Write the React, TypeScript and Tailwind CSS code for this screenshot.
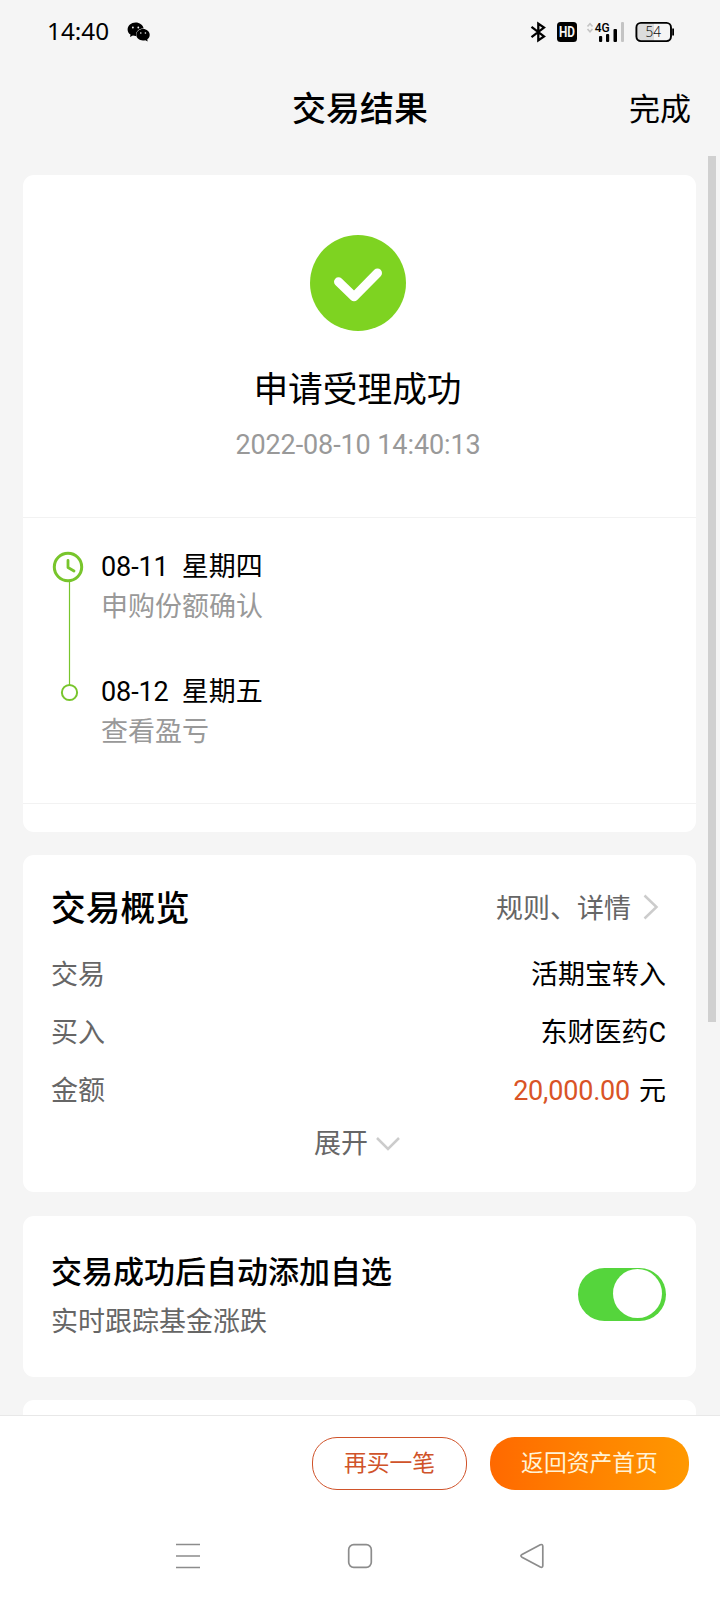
import type { ReactNode } from "react";

function WeChatIcon() {
  return (
    <svg width="24" height="20" viewBox="0 0 24 20" className="block">
      <path
        fill="#000"
        d="M8.6 0.6C4.2 0.6 0.6 3.6 0.6 7.4c0 2.1 1.1 4 2.9 5.2L3 15l2.9-1.5c.9.2 1.8.4 2.7.4h.5c0-.3-.1-.7-.1-1.1 0-3.600 3.300-6.300 7.300-6.300h.4C15.900 3.200 12.700.6 8.600.6Z"
      />
      <path
        fill="#000"
        d="M16 7.100c-3.700 0-6.700 2.500-6.700 5.700s3 5.700 6.700 5.700c.9 0 1.600-.1 2.300-.3l2.400 1.300-.5-2c1.600-1.100 2.500-2.800 2.500-4.700 0-3.200-3-5.700-6.700-5.700Z"
      />
      <g fill="#f4f4f4">
        <circle cx="5.900" cy="5.500" r="0.900" />
        <circle cx="11.300" cy="5.500" r="0.900" />
        <circle cx="13.800" cy="11" r="0.800" />
        <circle cx="18.400" cy="11" r="0.800" />
      </g>
    </svg>
  );
}

function StatusIcons() {
  return (
    <svg width="146" height="24" viewBox="0 0 146 24" className="block">
      <path
        d="M1.500 6.800 14 16.400 8.300 20.400V3.600L14 7.600 1.500 17.200"
        fill="none"
        stroke="#000"
        strokeWidth="2.300"
      />
      <rect x="27" y="2" width="20" height="20" rx="3.500" fill="#000" />
      <text x="29" y="17" fill="#f4f4f4" fontSize="14" fontWeight="700" fontFamily="Roboto, sans-serif" textLength="16" lengthAdjust="spacingAndGlyphs">
        HD
      </text>
      <path d="M57.500 6.500 60 3.700l2.500 2.800M57.500 9 60 11.800 62.500 9" fill="none" stroke="#c4c4c4" strokeWidth="1.600" />
      <text x="64.800" y="12" fill="#000" fontSize="13.500" fontWeight="500" fontFamily="Roboto, sans-serif" textLength="15" lengthAdjust="spacingAndGlyphs">
        4G
      </text>
      <rect x="69" y="16" width="3.200" height="6" rx="1" fill="#000" />
      <rect x="76" y="14" width="3.200" height="8" rx="1" fill="#000" />
      <rect x="83.500" y="9" width="3.500" height="13" rx="1" fill="#000" />
      <rect x="91" y="2" width="3" height="20" rx="1" fill="#c4c4c4" />
      <path d="M109 3h15v18h-15a3 3 0 0 1-3-3V6a3 3 0 0 1 3-3Z" fill="#dcdcdc" />
      <rect x="106.400" y="2.900" width="34.600" height="18.200" rx="4.500" fill="none" stroke="#000" strokeWidth="1.900" />
      <rect x="142.200" y="8.500" width="1.800" height="7" fill="#000" />
      <text x="115.600" y="16.600" fill="#111" fontSize="13.800" fontWeight="300" fontFamily="'Noto Sans', sans-serif" textLength="15.500" lengthAdjust="spacingAndGlyphs">
        54
      </text>
    </svg>
  );
}

function Card({ className, children }: { className: string; children?: ReactNode }) {
  return <section className={`ml-[23px] w-[673px] shrink-0 rounded-[11px] bg-white ${className}`}>{children}</section>;
}

function DetailRow({ label, children }: { label: string; children: ReactNode }) {
  return (
    <div className="flex h-[58px] items-center justify-between">
      <span className="text-[#666]">{label}</span>
      <span>{children}</span>
    </div>
  );
}

export default function App() {
  return (
    <div className="relative flex h-[1600px] w-[720px] flex-col overflow-hidden bg-[#f5f5f5] font-['Roboto','Noto_Sans_CJK_SC',sans-serif] text-[27px] leading-[40px] text-black">
      <div className="flex h-[64px] shrink-0 items-center justify-between pr-[44px] pl-[47px]">
        <div className="flex items-center">
          <span className="mb-[2px] w-[80px] font-['Noto_Sans',sans-serif] text-[24.300px]">14:40</span>
          <WeChatIcon />
        </div>
        <StatusIcons />
      </div>

      <header className="grid h-[92px] shrink-0 grid-cols-[1fr_auto_1fr] items-center px-[29px]">
        <h1 className="col-start-2 mb-[2px] text-[34px] leading-[44px] font-medium">交易结果</h1>
        <button className="justify-self-end text-[31px]">完成</button>
      </header>

      <main className="flex h-[1259px] shrink-0 flex-col gap-[23px] overflow-hidden pt-[19px]">
        <Card className="h-[657px]">
          <div className="flex h-[343px] flex-col items-center border-b border-[#f2f2f2] pt-[60px] pr-[4px]">
            <svg width="96" height="96" viewBox="0 0 96 96">
              <circle cx="48" cy="48" r="48" fill="#7ed321" />
              <path d="m28.500 46.800 15.500 15L67.500 38" fill="none" stroke="#fff" strokeWidth="9" strokeLinecap="round" strokeLinejoin="round" />
            </svg>
            <p className="mt-[35px] text-[34.700px] leading-[48px]">申请受理成功</p>
            <p className="mt-[11px] pl-px tracking-[-0.1px] text-[#999]">2022-08-10 14:40:13</p>
          </div>
          <div className="flex h-[286px] border-b border-[#f2f2f2] pt-[28px] pl-[29px]">
            <svg width="34" height="160" viewBox="0 0 34 160">
              <path d="M17.500 35v104" stroke="#78c52c" strokeWidth="1.200" />
              <circle cx="16" cy="21" r="13.700" fill="none" stroke="#78c52c" strokeWidth="3" />
              <path d="M16 14.500V21.500L22 25" fill="none" stroke="#78c52c" strokeWidth="2.800" strokeLinecap="round" strokeLinejoin="round" />
              <circle cx="17.500" cy="146.500" r="7.600" fill="none" stroke="#78c52c" strokeWidth="2" />
            </svg>
            <div className="mt-px ml-[15px]">
              <p className="tracking-[-0.1px] whitespace-pre">08-11  星期四</p>
              <p className="text-[#999]">申购份额确认</p>
              <p className="mt-[45px] tracking-[-0.1px] whitespace-pre">08-12  星期五</p>
              <p className="text-[#999]">查看盈亏</p>
            </div>
          </div>
        </Card>

        <Card className="h-[337px] pr-[30px] pl-[28px]">
          <div className="flex h-[91px] items-end justify-between pb-[17px]">
            <h2 className="text-[34.700px] font-medium">交易概览</h2>
            <a className="flex items-center text-[#666]">
              规则、详情
              <svg width="16" height="26" viewBox="0 0 16 26" className="mr-[7px] mb-[5px] ml-[12px]">
                <path d="M1.500 1.500 13.500 13l-12 11.500" fill="none" stroke="#ccc" strokeWidth="2.500" />
              </svg>
            </a>
          </div>
          <DetailRow label="交易">活期宝转入</DetailRow>
          <DetailRow label="买入">东财医药C</DetailRow>
          <DetailRow label="金额">
            <span className="tracking-[-0.2px] text-[#d95426]">20,000.00</span>
            <span className="ml-[9px]">元</span>
          </DetailRow>
          <div className="mt-[4px] flex items-center justify-center pr-[3px] text-[#666]">
            展开
            <svg width="24" height="14" viewBox="0 0 24 14" className="ml-[8px]">
              <path d="m1 1 11 11L23 1" fill="none" stroke="#ccc" strokeWidth="2.500" />
            </svg>
          </div>
        </Card>

        <Card className="mt-px flex h-[161px] items-center justify-between pr-[30px] pl-[28px]">
          <div>
            <h2 className="text-[31px] leading-[44px] font-medium">交易成功后自动添加自选</h2>
            <p className="mt-[7px] text-[#666]">实时跟踪基金涨跌</p>
          </div>
          <div className="mb-[5px] flex h-[53px] w-[88px] justify-end rounded-full bg-[#55d53c] pt-px pr-[4px]">
            <div className="size-[49px] rounded-full bg-white" />
          </div>
        </Card>

        <Card className="h-[60px]" />
      </main>

      <footer className="h-[185px] shrink-0 border-t border-[#e8e8e8] bg-white">
        <div className="flex justify-end gap-[23px] pt-[21px] pr-[31px] text-[22.800px]">
          <button className="h-[53px] w-[155px] rounded-[25px] border border-[#d0532a] text-[#d0532a]">再买一笔</button>
          <button className="h-[53px] w-[199px] rounded-[25px] bg-linear-to-r from-[#ff6900] to-[#ff9800] text-[#fff3d6]">返回资产首页</button>
        </div>
        <svg width="720" height="60" viewBox="0 0 720 60" className="mt-[34px]" fill="none" stroke="#8c8c8c" strokeWidth="1.700">
          <path d="M176 20.500h24M176 32h24M176 43.500h24" />
          <rect x="348.700" y="20.700" width="22.600" height="22.600" rx="5" />
          <path d="M540.300 20.800 522 30.600q-2.200 1.200 0 2.600l18.300 9.800q2.500 1 2.500-1.500V22.300q0-2.500-2.500-1.500Z" />
        </svg>
      </footer>

      <div className="absolute top-[156px] right-[4px] h-[866px] w-[8px] bg-[#d0d0d0]" />
    </div>
  );
}
